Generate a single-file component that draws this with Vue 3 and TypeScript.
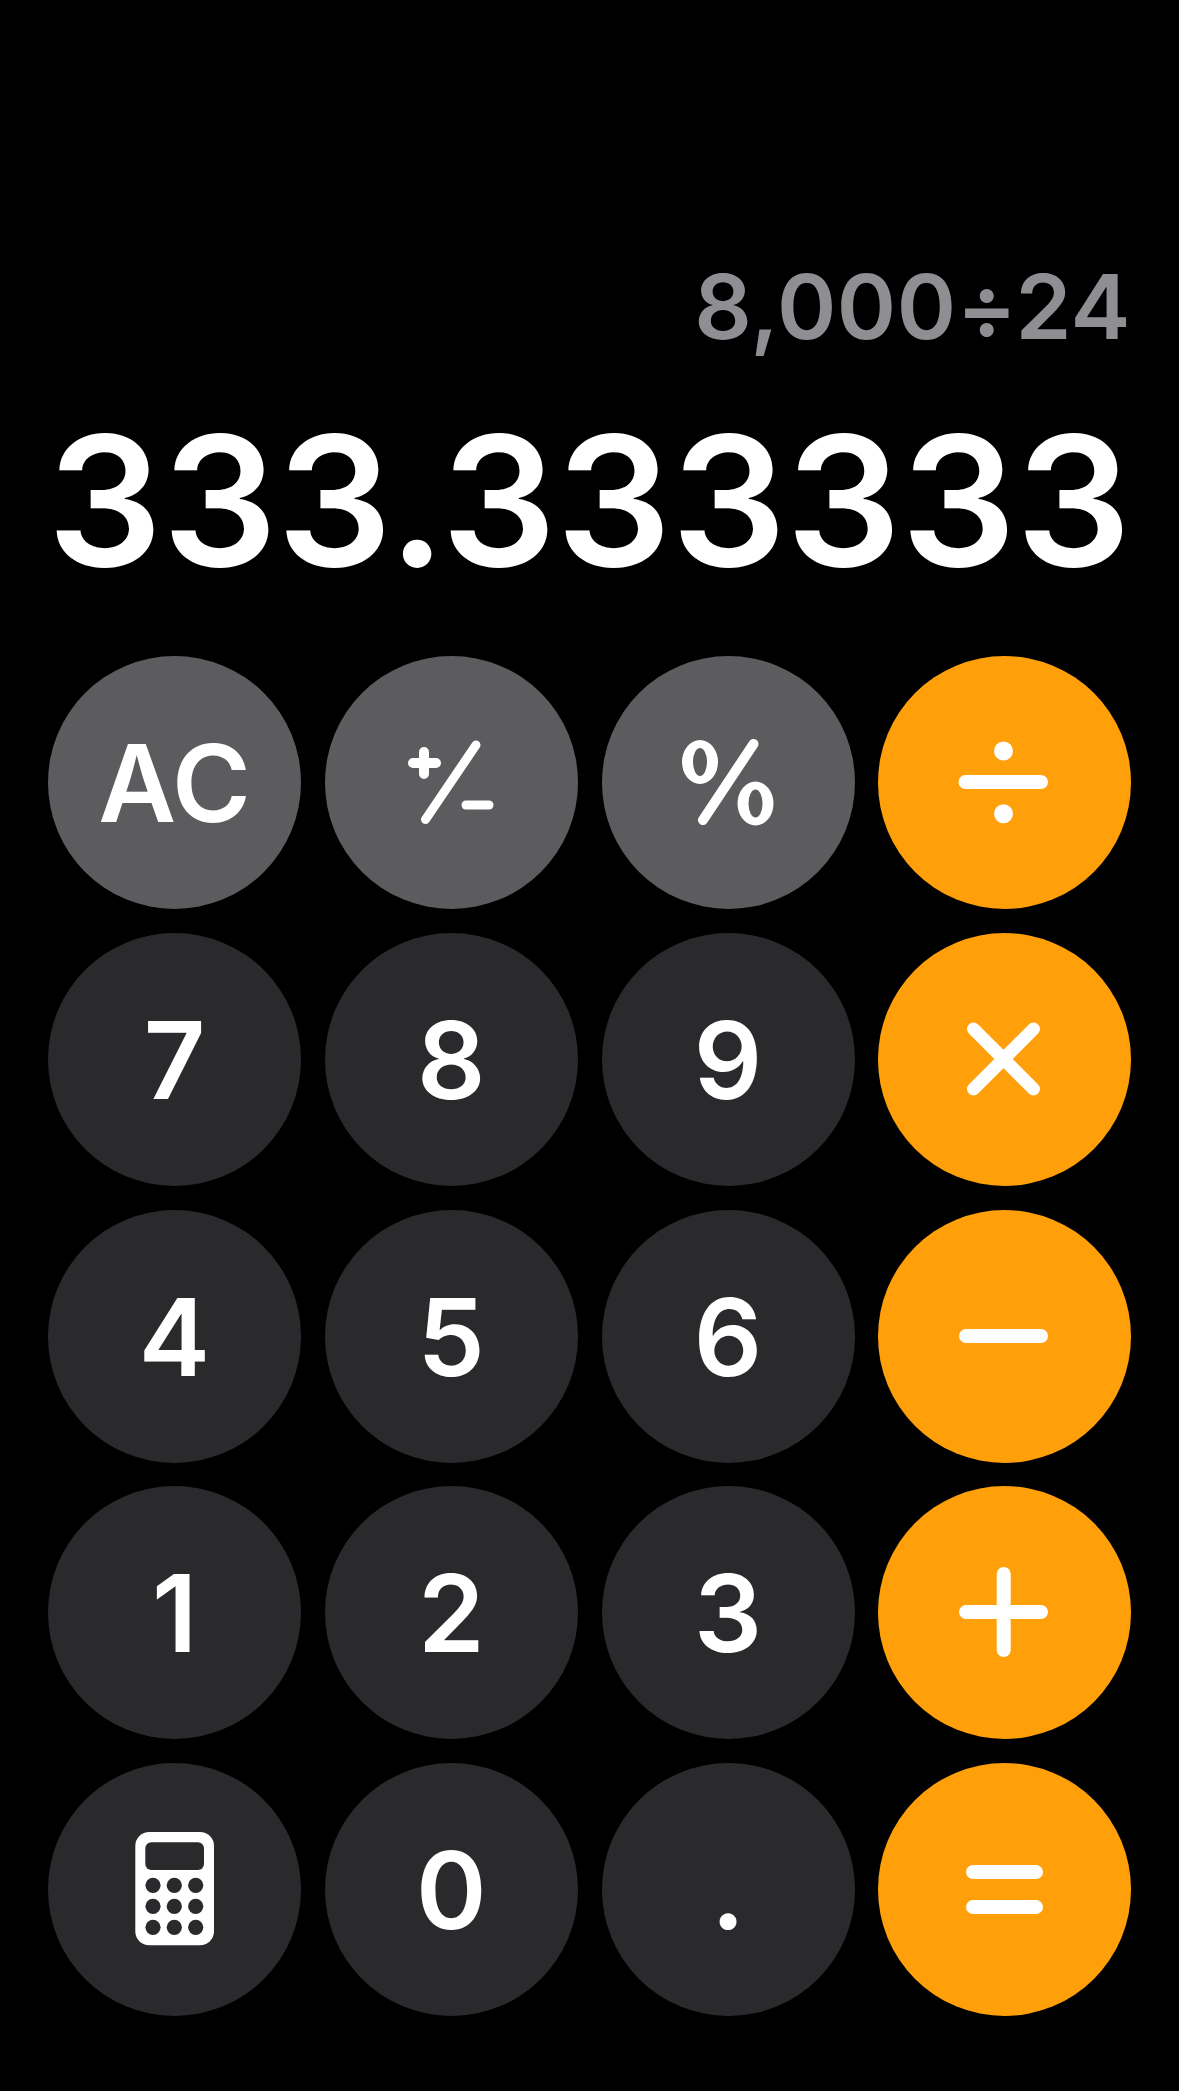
<script setup lang="ts">
type Key = { id: string; kind: 'fn' | 'num' | 'op'; label?: string }

const keys: Key[] = [
  { id: 'ac', kind: 'fn', label: 'AC' },
  { id: 'sign', kind: 'fn' },
  { id: 'percent', kind: 'fn' },
  { id: 'divide', kind: 'op' },
  { id: '7', kind: 'num', label: '7' },
  { id: '8', kind: 'num', label: '8' },
  { id: '9', kind: 'num', label: '9' },
  { id: 'times', kind: 'op' },
  { id: '4', kind: 'num', label: '4' },
  { id: '5', kind: 'num', label: '5' },
  { id: '6', kind: 'num', label: '6' },
  { id: 'minus', kind: 'op' },
  { id: '1', kind: 'num', label: '1' },
  { id: '2', kind: 'num', label: '2' },
  { id: '3', kind: 'num', label: '3' },
  { id: 'plus', kind: 'op' },
  { id: 'calc', kind: 'num' },
  { id: '0', kind: 'num', label: '0' },
  { id: 'dot', kind: 'num', label: '.' },
  { id: 'equals', kind: 'op' },
]

const dotXs = [105, 126.3, 147.7]
const dotYs = [122.3, 143.3, 164.3]
</script>

<template>
  <main class="calculator">
    <section class="display">
      <div class="expression">8,000÷24</div>
      <div class="result">333.333333</div>
    </section>
    <section class="keypad">
      <button v-for="key in keys" :key="key.id" class="key" :class="key.kind">
        <span v-if="key.label" class="label">{{ key.label }}</span>
        <svg v-else viewBox="0 0 253 253" class="glyph">
          <g v-if="key.id === 'sign'" class="line">
            <path d="M88 107H111M99 96V118" stroke-width="10" />
            <path d="M100.5 163.5L151 89" stroke-width="9" />
            <path d="M141 149H164" stroke-width="9" />
          </g>
          <g v-else-if="key.id === 'percent'">
            <ellipse class="fill" cx="98" cy="106" rx="18" ry="22" />
            <ellipse class="hole-fn" cx="98" cy="106" rx="7" ry="14" />
            <ellipse class="fill" cx="153.5" cy="147.5" rx="18" ry="22" />
            <ellipse class="hole-fn" cx="153.5" cy="147.5" rx="7" ry="14" />
            <path class="line" d="M101 164L151.5 88" stroke-width="10" />
          </g>
          <g v-else-if="key.id === 'divide'">
            <path class="line" d="M87.5 126H163" stroke-width="14" />
            <circle class="fill" cx="125.5" cy="95" r="9.5" />
            <circle class="fill" cx="125.5" cy="157.7" r="9.5" />
          </g>
          <path v-else-if="key.id === 'times'" class="line" d="M95.5 96L155.5 156M155.5 96L95.5 156" stroke-width="13" />
          <path v-else-if="key.id === 'minus'" class="line" d="M88 126H163" stroke-width="14" />
          <path v-else-if="key.id === 'plus'" class="line" d="M88 126H163M125.7 88V164" stroke-width="14" />
          <path v-else-if="key.id === 'equals'" class="line" d="M95 109H158M95 144H158" stroke-width="14" />
          <g v-else-if="key.id === 'calc'">
            <rect class="fill" x="87.3" y="69" width="78.7" height="113.3" rx="14" />
            <rect class="hole" x="97.3" y="79.3" width="58.7" height="27.7" rx="6" />
            <template v-for="y in dotYs" :key="y">
              <circle v-for="x in dotXs" :key="x" class="hole" :cx="x" :cy="y" r="7.6" />
            </template>
          </g>
        </svg>
      </button>
    </section>
  </main>
</template>

<style>
html,
body {
  margin: 0;
  background: #000;
}
</style>

<style scoped>
.calculator {
  box-sizing: border-box;
  width: 1179px;
  height: 2091px;
  padding: 0 48px;
  background: #000;
  font-family: Inter, "Liberation Sans", sans-serif;
}

.display {
  display: flex;
  flex-direction: column;
  align-items: flex-end;
  height: 656px;
  padding-top: 254px;
  box-sizing: border-box;
}

.expression {
  font-size: 90px;
  line-height: 106px;
  letter-spacing: 0.5px;
  color: #8e8e93;
  font-weight: 600;
  white-space: nowrap;
}

.result {
  margin-top: 46px;
  font-size: 181px;
  line-height: 190px;
  letter-spacing: -0.2px;
  color: #fff;
  font-weight: 600;
  white-space: nowrap;
}

.keypad {
  display: grid;
  grid-template-columns: repeat(4, 253px);
  grid-auto-rows: 253px;
  gap: 23.75px;
}

.key {
  position: relative;
  display: flex;
  align-items: center;
  justify-content: center;
  width: 253px;
  height: 253px;
  padding: 0;
  border: 0;
  border-radius: 50%;
  color: #fff;
  font-family: inherit;
  font-size: 107px;
  font-weight: 560;
}

.fn {
  background: #5c5c5f;
}

.num {
  background: #2a2a2c;
}

.op {
  background: #ff9f0a;
}

.label {
  padding-top: 2px;
  line-height: 1;
}

.glyph {
  display: block;
  width: 253px;
  height: 253px;
}

.line {
  fill: none;
  stroke: #fff;
  stroke-linecap: round;
}

.fill {
  fill: #fff;
}

.hole {
  fill: #2a2a2c;
}

.hole-fn {
  fill: #5c5c5f;
}
</style>
